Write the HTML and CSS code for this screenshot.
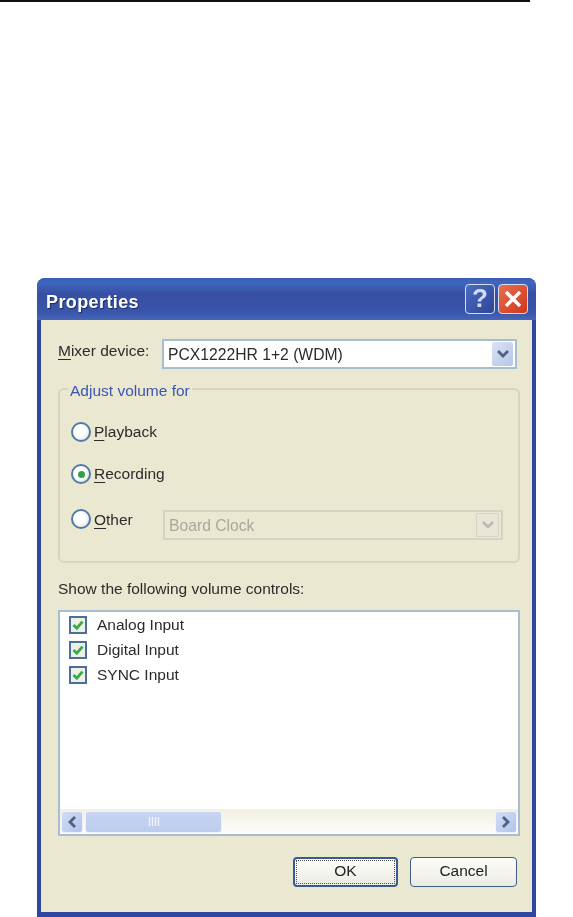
FILE: index.html
```html
<!DOCTYPE html>
<html lang="en">
<head>
    <meta charset="UTF-8">
    <meta name="viewport" content="width=device-width, initial-scale=1.0">
    <title>Properties</title>
    <link rel="stylesheet" href="styles.css">
</head>
<body>
    <div class="top-rule"></div>

    <div class="window">
        <div class="titlebar">
            <span class="title">Properties</span>
            <div class="title-buttons">
                <div class="cap-btn help">?</div>
                <div class="cap-btn close">
                    <svg width="20" height="20" viewBox="0 0 20 20"><path d="M3 3 L17 17 M17 3 L3 17" stroke="#fff" stroke-width="3.4" fill="none"/></svg>
                </div>
            </div>
        </div>

        <div class="content">
            <div class="mixer-row">
                <span class="label"><u>M</u>ixer device:</span>
                <div class="combo">
                    <span>PCX1222HR 1+2 (WDM)</span>
                    <div class="drop">
                        <svg width="14" height="10" viewBox="0 0 14 10"><path d="M2 2 L7 7 L12 2" stroke="#4d6185" stroke-width="2.8" fill="none"/></svg>
                    </div>
                </div>
            </div>

            <div class="group">
                <div class="legend">Adjust volume for</div>
                <div class="radio-row first">
                    <span class="radio"></span>
                    <span class="label"><u>P</u>layback</span>
                </div>
                <div class="radio-row second">
                    <span class="radio checked"></span>
                    <span class="label"><u>R</u>ecording</span>
                </div>
                <div class="radio-row third">
                    <span class="radio"></span>
                    <span class="label other-label"><u>O</u>ther</span>
                    <div class="combo disabled">
                        <span>Board Clock</span>
                        <div class="drop">
                            <svg width="14" height="10" viewBox="0 0 14 10"><path d="M2 2 L7 7 L12 2" stroke="#b9b9ac" stroke-width="2.6" fill="none"/></svg>
                        </div>
                    </div>
                </div>
            </div>

            <div class="show-label">Show the following volume controls:</div>

            <div class="list">
                <div class="items">
                    <div class="item"><span class="check"><svg width="14" height="14" viewBox="0 0 14 14"><path d="M2.5 7 L5.8 10.2 L11.5 3.6" stroke="#35ab4b" stroke-width="2.8" fill="none"/></svg></span>Analog Input</div>
                    <div class="item"><span class="check"><svg width="14" height="14" viewBox="0 0 14 14"><path d="M2.5 7 L5.8 10.2 L11.5 3.6" stroke="#35ab4b" stroke-width="2.8" fill="none"/></svg></span>Digital Input</div>
                    <div class="item"><span class="check"><svg width="14" height="14" viewBox="0 0 14 14"><path d="M2.5 7 L5.8 10.2 L11.5 3.6" stroke="#35ab4b" stroke-width="2.8" fill="none"/></svg></span>SYNC Input</div>
                </div>
                <div class="scrollbar">
                    <div class="sb-btn">
                        <svg width="12" height="14" viewBox="0 0 12 14"><path d="M9 2 L4 7 L9 12" stroke="#4d6185" stroke-width="2.8" fill="none"/></svg>
                    </div>
                    <div class="thumb">
                        <svg width="12" height="9" viewBox="0 0 12 9"><path d="M1.5 0 V9 M4.5 0 V9 M7.5 0 V9 M10.5 0 V9" stroke="#f1f4fb" stroke-width="1.4"/></svg>
                    </div>
                    <div class="track"></div>
                    <div class="sb-btn">
                        <svg width="12" height="14" viewBox="0 0 12 14"><path d="M3 2 L8 7 L3 12" stroke="#4d6185" stroke-width="2.8" fill="none"/></svg>
                    </div>
                </div>
            </div>

            <div class="buttons">
                <div class="btn default"><span>OK</span></div>
                <div class="btn">Cancel</div>
            </div>
        </div>
    </div>
</body>
</html>
```

FILE: styles.css
```css
body {
    margin: 0;
    padding: 0;
    background-color: white;
    font-family: "Liberation Sans", Arial, sans-serif;
    font-size: 15.5px;
    color: #2b2b2b;
}
u {
    text-underline-offset: 3px;
}
.top-rule {
    height: 2px;
    margin-right: 43px;
    background-color: #111;
}
.window {
    box-sizing: border-box;
    width: 499px;
    height: 639px;
    margin: 276px 0 0 37px;
    display: flex;
    flex-direction: column;
    background-color: #2f47a3;
    border-radius: 8px 8px 0 0;
    filter: blur(0.5px);
}
.titlebar {
    height: 42px;
    flex-shrink: 0;
    display: flex;
    align-items: center;
    justify-content: space-between;
    padding: 0 8px 0 9px;
    border-radius: 8px 8px 0 0;
    background: linear-gradient(#3a5db8 0, #4066be 5px, #364fa3 16px, #3a56aa 34px, #4566b8 42px);
}
.title {
    color: white;
    font-weight: bold;
    font-size: 18px;
    letter-spacing: 0.4px;
    margin-top: 6px;
    text-shadow: 1px 1px 1px #1c2d70;
}
.title-buttons {
    display: flex;
    gap: 3px;
    margin-top: -1px;
}
.cap-btn {
    box-sizing: border-box;
    width: 30px;
    height: 30px;
    border: 1.5px solid #d6def0;
    border-radius: 4px;
    display: flex;
    align-items: center;
    justify-content: center;
    color: white;
}
.help {
    background: linear-gradient(135deg, #4a6cc0, #2d4598);
    font-size: 26px;
    font-weight: bold;
    color: #d3dcf1;
}
.close {
    background: linear-gradient(135deg, #e8704f, #d2341c);
}
.content {
    flex: 1;
    margin: 0 4px 5px;
    background-color: #ebe8d2;
    display: flex;
    flex-direction: column;
    padding: 19px 15px 0 17px;
}
.mixer-row {
    display: flex;
    align-items: center;
    height: 30px;
}
.mixer-row .label {
    width: 104px;
    margin-top: -7px;
}
.combo {
    box-sizing: border-box;
    flex: 1;
    height: 30px;
    display: flex;
    align-items: center;
    justify-content: space-between;
    padding: 0 2px 0 4px;
    background-color: white;
    border: 2px solid #a9bdd0;
    font-size: 15.7px;
}
.combo > span {
    padding-top: 2px;
}
.drop {
    width: 21px;
    height: 24px;
    display: flex;
    align-items: center;
    justify-content: center;
    background: linear-gradient(135deg, #dbe3f5, #b5c4e8);
    border-radius: 2px;
}
.group {
    box-sizing: border-box;
    width: 462px;
    height: 175px;
    margin-top: 19px;
    border: 2px solid #d7d5bf;
    border-radius: 6px;
    position: relative;
    padding: 30px 15px 0 11px;
}
.legend {
    position: absolute;
    top: -8px;
    left: 8px;
    padding: 0 2px;
    background-color: #ebe8d2;
    color: #3a55b5;
    line-height: 18px;
}
.radio-row {
    display: flex;
    align-items: center;
    height: 24px;
}
.second {
    margin-top: 18px;
}
.third {
    margin-top: 24px;
    height: 30px;
}
.radio {
    box-sizing: border-box;
    width: 20px;
    height: 20px;
    margin-right: 3px;
    border: 2px solid #4f7bab;
    border-radius: 50%;
    background: radial-gradient(circle at 40% 40%, #fff 40%, #dcdad0 100%);
    display: flex;
    align-items: center;
    justify-content: center;
}
.checked::after {
    content: "";
    width: 7px;
    height: 7px;
    border-radius: 50%;
    background-color: #2ca34a;
}
.other-label {
    width: 69px;
    margin-top: -10px;
}
.third .radio {
    margin-top: -12px;
}
.disabled {
    flex: none;
    width: 340px;
    background-color: #ebe8d2;
    border-color: #d6d4c0;
    color: #a9a799;
}
.disabled .drop {
    background: #e8e6d8;
    border: 1px solid #d6d4c0;
    height: 22px;
}
.show-label {
    margin-top: 17px;
    line-height: 18px;
}
.list {
    box-sizing: border-box;
    width: 462px;
    height: 226px;
    margin-top: 12px;
    border: 2px solid #a9bdd0;
    background-color: white;
    display: flex;
    flex-direction: column;
}
.items {
    flex: 1;
    padding: 0 0 0 9px;
}
.item {
    display: flex;
    align-items: center;
    height: 25px;
    gap: 10px;
}
.check {
    box-sizing: border-box;
    width: 18px;
    height: 18px;
    border: 2px solid #4b6f9c;
    background-color: #f0efe6;
    display: flex;
    align-items: center;
    justify-content: center;
}
.scrollbar {
    height: 25px;
    display: flex;
    align-items: center;
    gap: 2px;
    padding: 0 1px 0 1px;
    background: linear-gradient(#f2f0e4, #fdfdfa);
}
.sb-btn {
    box-sizing: border-box;
    width: 22px;
    height: 22px;
    flex-shrink: 0;
    display: flex;
    align-items: center;
    justify-content: center;
    background: linear-gradient(135deg, #d3dcf4, #b3c3ea);
    border: 1px solid #eef2fb;
    border-radius: 3px;
}
.thumb {
    box-sizing: border-box;
    width: 137px;
    height: 22px;
    display: flex;
    align-items: center;
    justify-content: center;
    background: linear-gradient(#c8d5f2, #bccced);
    border: 1px solid #eef2fb;
    border-radius: 3px;
}
.track {
    flex: 1;
}
.buttons {
    display: flex;
    justify-content: flex-end;
    gap: 12px;
    margin-top: 21px;
}
.btn {
    box-sizing: border-box;
    width: 107px;
    height: 30px;
    display: flex;
    align-items: center;
    justify-content: center;
    padding-bottom: 2px;
    background: linear-gradient(#fdfdfa, #ecebe2);
    border: 1.5px solid #3d5f8f;
    border-radius: 4px;
    color: #222;
}
.default {
    width: 105px;
    border: 2px solid #3a5a94;
    padding: 1px;
}
.default span {
    box-sizing: border-box;
    width: 100%;
    height: 100%;
    display: flex;
    align-items: center;
    justify-content: center;
    padding-bottom: 2px;
    border: 1px dotted #555;
}
```
